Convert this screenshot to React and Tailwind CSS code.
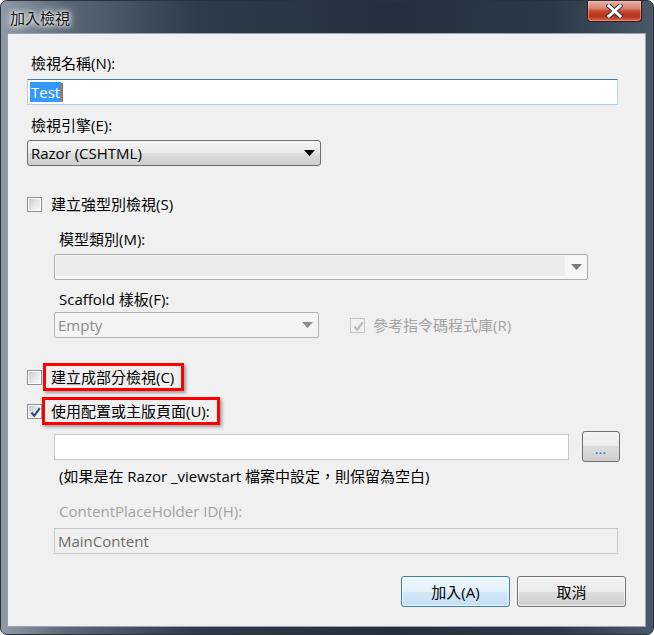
import React from "react";

const F = "font-['Open_Sans','Noto_Sans_CJK_TC',sans-serif]";

function Check({ checked, disabled }) {
  return (
    <span
      className={
        disabled
          ? "relative flex h-[15px] w-[15px] shrink-0 items-center justify-center border border-[#c2c2c2] bg-[#f4f4f4]"
          : "relative flex h-[15px] w-[15px] shrink-0 items-center justify-center border border-[#8e8f8f] bg-white"
      }
    >
      <span
        className={
          disabled
            ? "h-[11px] w-[11px] bg-[#f1f1f1]"
            : "h-[11px] w-[11px] bg-gradient-to-br from-[#c4c9cf] via-[#e4e6e8] to-[#f7f7f7]"
        }
      />
      {checked && (
        <svg className="absolute left-[1px] top-[1px]" width="13" height="13" viewBox="0 0 13 13">
          <path
            d="M2.5 6.5 L5.2 9.8 L10.8 2.2"
            fill="none"
            stroke={disabled ? "#b9b9b9" : "#2f4b8d"}
            strokeWidth="2"
          />
        </svg>
      )}
    </span>
  );
}

function Arrow({ color }) {
  return (
    <svg width="11" height="6" viewBox="0 0 11 6">
      <path d="M0 0 H11 L5.5 6 Z" fill={color} />
    </svg>
  );
}

export default function App() {
  return (
    <div className={`h-[635px] w-[654px] bg-white ${F} text-[15px] leading-[20px] text-black`}>
      <div className="flex h-full w-full flex-col rounded-[7px] border border-[#2a323c] bg-[linear-gradient(90deg,#8f9ba7_0%,#5a6776_10%,#2e3b4a_30%,#24303d_60%,#2c3949_85%,#4a5868_100%)]">
        {/* title bar */}
        <div className="flex h-[32px] shrink-0 items-start justify-between">
          <div className="mt-[7px] ml-[9px] text-[15px] leading-[20px] text-[#111] [text-shadow:0_0_6px_#fff,0_0_10px_#fff,0_0_3px_#fff]">
            加入檢視
          </div>
          <div className="mr-[11px] flex h-[21px] w-[55px] items-center justify-center rounded-b-[4px] border border-t-0 border-[#3a1710] bg-[linear-gradient(180deg,#e8b0a2_0%,#d98a77_35%,#c54a30_50%,#b8301a_75%,#d0684a_100%)] shadow-[inset_0_0_0_1px_rgba(255,200,190,0.45)]">
            <svg width="17" height="14" viewBox="0 0 17 14">
              <path
                d="M3 2 L14 12 M14 2 L3 12"
                stroke="#3a3a3a"
                strokeWidth="5"
                strokeLinecap="square"
              />
              <path
                d="M3 2 L14 12 M14 2 L3 12"
                stroke="#ffffff"
                strokeWidth="3"
                strokeLinecap="square"
              />
            </svg>
          </div>
        </div>

        {/* client area */}
        <div className="mb-[7px] ml-[6px] mr-[7px] flex flex-1 flex-col border border-[#9aa5b1] bg-[#f0f0f0] pl-[19px]">
          <div className="mt-[19px] ml-[4px]">檢視名稱(N):</div>

          <div className="mt-[6px] flex h-[26px] w-[591px] items-center border border-[#b5cfe7] border-t-[#3d7bad] bg-white pl-[2px]">
            <span className="flex h-[20px] items-center bg-[#3399ff] px-[1px] text-white">Test</span>
            <span className="h-[19px] w-[2px] bg-[#d06a1e]" />
          </div>

          <div className="mt-[10px] ml-[4px]">檢視引擎(E):</div>

          <div className="mt-[5px] flex h-[26px] w-[294px] items-center justify-between rounded-[3px] border border-[#707070] bg-[linear-gradient(180deg,#f3f3f3_0%,#ebebeb_50%,#dddddd_50%,#cfcfcf_100%)] pl-[3px] pr-[5px]">
            <span>Razor (CSHTML)</span>
            <Arrow color="#000" />
          </div>

          <div className="mt-[28px] flex items-center">
            <Check />
            <span className="ml-[9px]">建立強型別檢視(S)</span>
          </div>

          <div className="mt-[15px] ml-[32px]">模型類別(M):</div>

          <div className="mt-[5px] ml-[27px] flex h-[26px] w-[534px] items-stretch rounded-[2px] border border-[#acacac] bg-[#f6f6f6]">
            <div className="mt-[1px] mb-[3px] ml-[1px] flex-1 bg-[#ececec]" />
            <div className="flex w-[22px] items-center justify-center">
              <Arrow color="#7a7a7a" />
            </div>
          </div>

          <div className="mt-[9px] ml-[32px]">Scaffold 樣板(F):</div>

          <div className="mt-[3px] ml-[27px] flex items-center">
            <div className="flex h-[26px] w-[265px] items-center justify-between rounded-[2px] border border-[#adb2b5] bg-[#f4f4f4] pl-[3px] pr-[5px] text-[#8a8a8a]">
              <span>Empty</span>
              <Arrow color="#8a8a8a" />
            </div>
            <div className="ml-[31px] flex items-center">
              <Check checked disabled />
              <span className="ml-[8px] text-[#a3a3a3]">參考指令碼程式庫(R)</span>
            </div>
          </div>

          <div className="mt-[25px] flex items-center">
            <Check />
            <span className="ml-[1px] border-[3px] border-[#ff0000] py-[1px] pl-[5px] pr-[7px] shadow-[2px_2px_3px_rgba(0,0,0,0.35)]">
              建立成部分檢視(C)
            </span>
          </div>

          <div className="mt-[6px] flex items-center">
            <Check checked />
            <span className="ml-[0px] border-[3px] border-[#ff0000] py-[1px] pl-[6px] pr-[7px] shadow-[2px_2px_3px_rgba(0,0,0,0.35)]">
              使用配置或主版頁面(U):
            </span>
          </div>

          <div className="mt-[6px] ml-[27px] flex h-[31px] items-center">
            <div className="h-[26px] w-[515px] border border-[#c5c8cc] bg-white" />
            <div className="ml-[13px] flex h-[31px] w-[38px] items-center justify-center rounded-[3px] border border-[#707070] bg-[linear-gradient(180deg,#f3f3f3_0%,#ebebeb_50%,#dddddd_50%,#cfcfcf_100%)] pt-[6px] text-[10px] leading-[10px] font-bold tracking-[1px] text-[#1f6fd0]">
              ...
            </div>
          </div>

          <div className="mt-[4px] ml-[32px]">(如果是在 Razor _viewstart 檔案中設定，則保留為空白)</div>

          <div className="mt-[15px] ml-[32px] text-[#a3a3a3]">ContentPlaceHolder ID(H):</div>

          <div className="mt-[7px] ml-[27px] flex h-[26px] w-[564px] items-center border border-[#c5c8cc] bg-[#f0f0f0] pl-[3px] text-[#6d6d6d]">
            MainContent
          </div>

          <div className="mt-[22px] mr-[19px] flex justify-end gap-[7px]">
            <div className="flex h-[31px] w-[109px] items-center justify-center rounded-[3px] border border-[#3c7fb1] bg-[linear-gradient(180deg,#eef7fd_0%,#e3f1fb_50%,#d2e8f8_50%,#c4e0f4_100%)] shadow-[inset_0_0_0_1px_rgba(255,255,255,0.7)]">
              加入(A)
            </div>
            <div className="flex h-[31px] w-[109px] items-center justify-center rounded-[3px] border border-[#707070] bg-[linear-gradient(180deg,#f3f3f3_0%,#ebebeb_50%,#dddddd_50%,#cfcfcf_100%)] shadow-[inset_0_0_0_1px_rgba(255,255,255,0.7)]">
              取消
            </div>
          </div>
        </div>
      </div>
    </div>
  );
}
